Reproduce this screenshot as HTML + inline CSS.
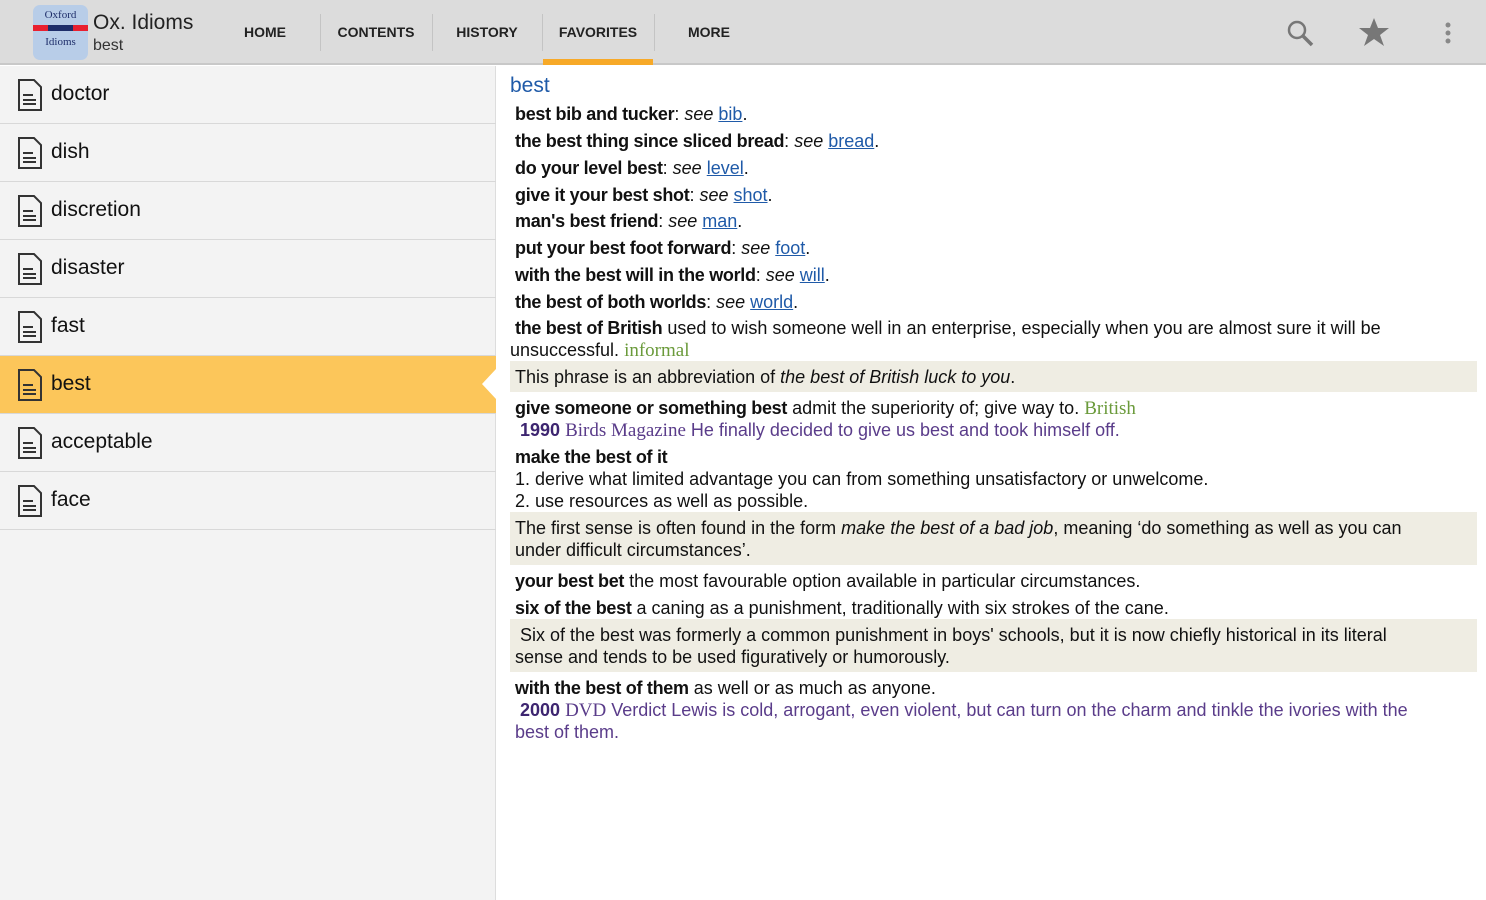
<!DOCTYPE html>
<html><head><meta charset="utf-8"><style>
*{margin:0;padding:0;box-sizing:border-box}
body{width:1486px;height:900px;overflow:hidden;font-family:"Liberation Sans",sans-serif;background:#fff;position:relative}
#top{position:absolute;left:0;top:0;width:1486px;height:65px;background:#dcdcdc;border-bottom:2px solid #c8c8c8}
.tab{position:absolute;top:0;height:65px;line-height:65px;font-size:14px;font-weight:bold;color:#222;text-align:center}
.sep{position:absolute;top:14px;width:1px;height:37px;background:#c4c4c4}
#left{position:absolute;left:0;top:66px;width:496px;height:834px;background:#f3f3f3;border-right:1px solid #ddd}
.row{position:absolute;left:0;width:496px;height:58px;border-bottom:1px solid #d8d8d8;font-size:21px;color:#111}
.row span{position:absolute;left:51px;top:16px}
.row svg{position:absolute;left:17px;top:13px}
.sel{background:#fcc65a}
.l{position:absolute;font-size:18px;color:#111;white-space:nowrap}
.b{font-weight:bold;letter-spacing:-0.3px}
a{color:#1f5aa8;text-decoration:underline}
.g{color:#6a9a3a;font-family:"Liberation Serif",serif;font-size:19px}
.p{color:#5a3c8a}
.pb{color:#3d2570;font-weight:bold}
.box{position:absolute;left:510px;width:967px;background:#efede3}
</style></head><body>
<div id="top">
<div style="position:absolute;left:33px;top:5px;width:55px;height:55px;border-radius:7px;background:#b8cde8;overflow:hidden">
<div style="position:absolute;top:4px;width:55px;text-align:center;font-family:'Liberation Serif',serif;font-size:11px;color:#1e2e6a">Oxford</div>
<div style="position:absolute;top:20px;width:55px;height:6px;background:#e82030"></div>
<div style="position:absolute;top:20px;left:15px;width:25px;height:6px;background:#1e2e6a"></div>
<div style="position:absolute;top:31px;width:55px;text-align:center;font-family:'Liberation Serif',serif;font-size:11px;color:#1e2e6a">Idioms</div>
</div>
<div style="position:absolute;left:93px;top:11px;font-size:21px;color:#222">Ox. Idioms</div>
<div style="position:absolute;left:93px;top:37px;font-size:16px;color:#333">best</div>
<div class="tab" style="left:220px;width:90px">HOME</div>
<div class="sep" style="left:320px"></div>
<div class="tab" style="left:321px;width:110px">CONTENTS</div>
<div class="sep" style="left:432px"></div>
<div class="tab" style="left:433px;width:108px">HISTORY</div>
<div class="sep" style="left:542px"></div>
<div class="tab" style="left:543px;width:110px">FAVORITES</div>
<div style="position:absolute;left:543px;top:59px;width:110px;height:6px;background:#f7a928"></div>
<div class="sep" style="left:654px"></div>
<div class="tab" style="left:655px;width:108px">MORE</div>
<svg style="position:absolute;left:1286px;top:19px" width="30" height="28"><circle cx="11" cy="11" r="8" fill="none" stroke="#777" stroke-width="2.5"/><line x1="17" y1="17" x2="26" y2="26" stroke="#777" stroke-width="3.5"/></svg>
<svg style="position:absolute;left:1358px;top:17px" width="32" height="30"><polygon points="16,1 20,11 31,11 22,18 26,29 16,22 6,29 10,18 1,11 12,11" fill="#777"/></svg>
<svg style="position:absolute;left:1444px;top:22px" width="8" height="24"><circle cx="4" cy="3" r="2.5" fill="#888"/><circle cx="4" cy="11" r="2.5" fill="#888"/><circle cx="4" cy="19" r="2.5" fill="#888"/></svg>
</div>
<div id="left">
<div class="row" style="top:0"><svg width="26" height="32"><path d="M2 1h15l7 7v23H2z" fill="none" stroke="#333" stroke-width="2"/><path d="M6 16h10M6 21h13M6 25h13" stroke="#333" stroke-width="2"/></svg><span>doctor</span></div>
<div class="row" style="top:58px"><svg width="26" height="32"><path d="M2 1h15l7 7v23H2z" fill="none" stroke="#333" stroke-width="2"/><path d="M6 16h10M6 21h13M6 25h13" stroke="#333" stroke-width="2"/></svg><span>dish</span></div>
<div class="row" style="top:116px"><svg width="26" height="32"><path d="M2 1h15l7 7v23H2z" fill="none" stroke="#333" stroke-width="2"/><path d="M6 16h10M6 21h13M6 25h13" stroke="#333" stroke-width="2"/></svg><span>discretion</span></div>
<div class="row" style="top:174px"><svg width="26" height="32"><path d="M2 1h15l7 7v23H2z" fill="none" stroke="#333" stroke-width="2"/><path d="M6 16h10M6 21h13M6 25h13" stroke="#333" stroke-width="2"/></svg><span>disaster</span></div>
<div class="row" style="top:232px"><svg width="26" height="32"><path d="M2 1h15l7 7v23H2z" fill="none" stroke="#333" stroke-width="2"/><path d="M6 16h10M6 21h13M6 25h13" stroke="#333" stroke-width="2"/></svg><span>fast</span></div>
<div class="row sel" style="top:290px"><svg width="26" height="32"><path d="M2 1h15l7 7v23H2z" fill="none" stroke="#333" stroke-width="2"/><path d="M6 16h10M6 21h13M6 25h13" stroke="#333" stroke-width="2"/></svg><span>best</span></div>
<div class="row" style="top:348px"><svg width="26" height="32"><path d="M2 1h15l7 7v23H2z" fill="none" stroke="#333" stroke-width="2"/><path d="M6 16h10M6 21h13M6 25h13" stroke="#333" stroke-width="2"/></svg><span>acceptable</span></div>
<div class="row" style="top:406px"><svg width="26" height="32"><path d="M2 1h15l7 7v23H2z" fill="none" stroke="#333" stroke-width="2"/><path d="M6 16h10M6 21h13M6 25h13" stroke="#333" stroke-width="2"/></svg><span>face</span></div>
</div>
<svg style="position:absolute;left:481px;top:355px" width="16" height="58"><polygon points="16,0 16,58 15,58 15,44 1,29 15,14 15,0" fill="#fff"/></svg>
<div class="box" style="top:361px;height:31px"></div>
<div class="box" style="top:512px;height:53px"></div>
<div class="box" style="top:619px;height:53px"></div>
<div class="l" style="left:510px;top:74px;font-size:21px;color:#1f5aa8">best</div>
<div class="l" style="left:515px;top:104px"><span class="b">best bib and tucker</span>: <i>see</i> <a>bib</a>.</div>
<div class="l" style="left:515px;top:131px"><span class="b">the best thing since sliced bread</span>: <i>see</i> <a>bread</a>.</div>
<div class="l" style="left:515px;top:158px"><span class="b">do your level best</span>: <i>see</i> <a>level</a>.</div>
<div class="l" style="left:515px;top:185px"><span class="b">give it your best shot</span>: <i>see</i> <a>shot</a>.</div>
<div class="l" style="left:515px;top:211px"><span class="b">man's best friend</span>: <i>see</i> <a>man</a>.</div>
<div class="l" style="left:515px;top:238px"><span class="b">put your best foot forward</span>: <i>see</i> <a>foot</a>.</div>
<div class="l" style="left:515px;top:265px"><span class="b">with the best will in the world</span>: <i>see</i> <a>will</a>.</div>
<div class="l" style="left:515px;top:292px"><span class="b">the best of both worlds</span>: <i>see</i> <a>world</a>.</div>
<div class="l" style="left:515px;top:318px"><span class="b">the best of British</span> used to wish someone well in an enterprise, especially when you are almost sure it will be</div>
<div class="l" style="left:510px;top:340px">unsuccessful. <span class="g">informal</span></div>
<div class="l" style="left:515px;top:367px">This phrase is an abbreviation of <i>the best of British luck to you</i>.</div>
<div class="l" style="left:515px;top:398px"><span class="b">give someone or something best</span> admit the superiority of; give way to. <span class="g">British</span></div>
<div class="l" style="left:515px;top:420px"><span class="pb">&nbsp;1990</span> <span class="p"><span style="font-family:'Liberation Serif',serif;font-size:19px">Birds Magazine</span> He finally decided to give us best and took himself off.</span></div>
<div class="l" style="left:515px;top:447px"><span class="b">make the best of it</span></div>
<div class="l" style="left:515px;top:469px">1. derive what limited advantage you can from something unsatisfactory or unwelcome.</div>
<div class="l" style="left:515px;top:491px">2. use resources as well as possible.</div>
<div class="l" style="left:515px;top:518px">The first sense is often found in the form <i>make the best of a bad job</i>, meaning ‘do something as well as you can</div>
<div class="l" style="left:515px;top:540px">under difficult circumstances’.</div>
<div class="l" style="left:515px;top:571px"><span class="b">your best bet</span> the most favourable option available in particular circumstances.</div>
<div class="l" style="left:515px;top:598px"><span class="b">six of the best</span> a caning as a punishment, traditionally with six strokes of the cane.</div>
<div class="l" style="left:515px;top:625px">&nbsp;Six of the best was formerly a common punishment in boys' schools, but it is now chiefly historical in its literal</div>
<div class="l" style="left:515px;top:647px">sense and tends to be used figuratively or humorously.</div>
<div class="l" style="left:515px;top:678px"><span class="b">with the best of them</span> as well or as much as anyone.</div>
<div class="l" style="left:515px;top:700px"><span class="pb">&nbsp;2000</span> <span class="p"><span style="font-family:'Liberation Serif',serif;font-size:19px">DVD</span> Verdict Lewis is cold, arrogant, even violent, but can turn on the charm and tinkle the ivories with the</span></div>
<div class="l p" style="left:515px;top:722px">best of them.</div>
</body></html>
